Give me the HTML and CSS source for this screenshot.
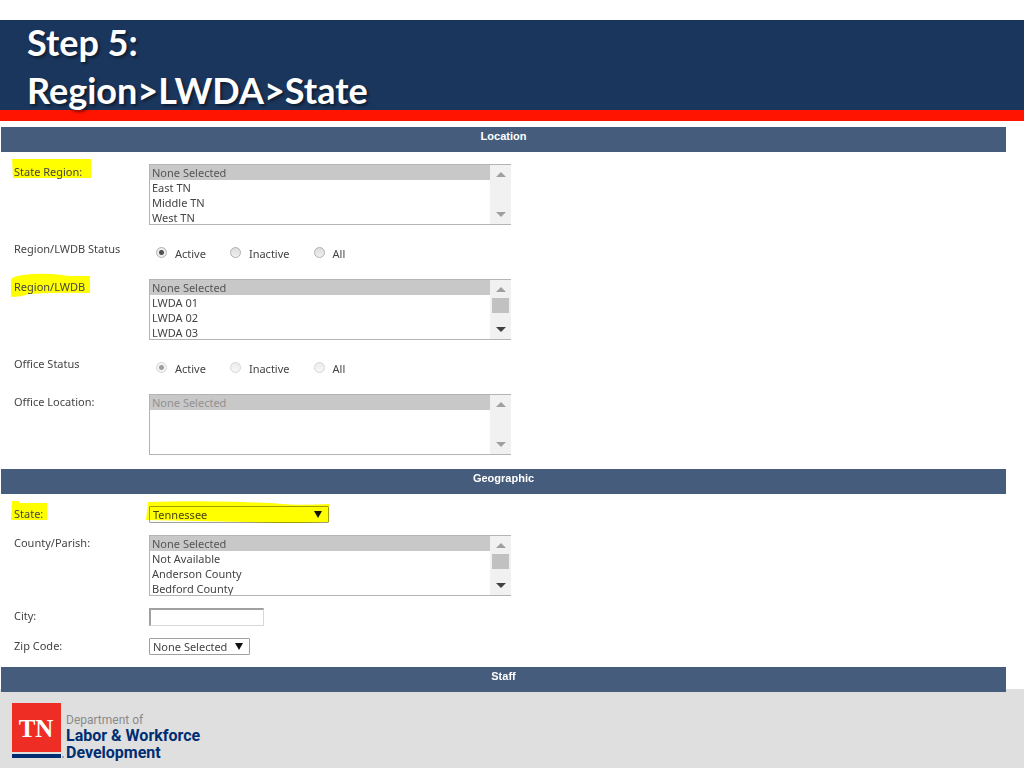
FILE: index.html
```html
<!DOCTYPE html>
<html lang="en">
<head>
    <meta charset="UTF-8">
    <meta name="viewport" content="width=device-width, initial-scale=1.0">
    <title>Step 5: Region&gt;LWDA&gt;State</title>
    <link rel="stylesheet" href="styles.css">
</head>
<body>
    <header class="banner">
        <h1>Step 5:<br>Region&gt;LWDA&gt;State</h1>
    </header>

    <form class="criteria">
        <!-- Location -->
        <h2 class="bar">Location</h2>
        <div class="section location">
            <div class="row">
                <label class="name" for="stateRegion">
                    <svg class="marker" width="82" height="22" viewBox="0 0 82 22"><path d="M1 1H80V20H2Z"/></svg>
                    <span>State Region:</span>
                </label>
                <div class="listbox">
                    <select id="stateRegion" multiple size="4">
                        <option selected>None Selected</option>
                        <option>East TN</option>
                        <option>Middle TN</option>
                        <option>West TN</option>
                    </select>
                    <div class="scroll">
                        <i class="up"></i>
                        <i class="down"></i>
                    </div>
                </div>
            </div>

            <div class="row status">
                <span class="name" id="regionStatus">Region/LWDB Status</span>
                <div class="radios" role="radiogroup" aria-labelledby="regionStatus">
                    <label><input type="radio" name="region" checked>Active</label>
                    <label><input type="radio" name="region">Inactive</label>
                    <label><input type="radio" name="region">All</label>
                </div>
            </div>

            <div class="row">
                <label class="name" for="region">
                    <svg class="marker tall" width="82" height="26" viewBox="0 0 82 26"><path d="M0 7Q3 4 12 3Q34 0 58 4L79 4V21Q48 20 18 22Q10 25 0 25Z"/></svg>
                    <span>Region/LWDB</span>
                </label>
                <div class="listbox">
                    <select id="region" multiple size="4">
                        <option selected>None Selected</option>
                        <option>LWDA 01</option>
                        <option>LWDA 02</option>
                        <option>LWDA 03</option>
                    </select>
                    <div class="scroll active">
                        <i class="up"></i>
                        <b class="thumb"></b>
                        <i class="down"></i>
                    </div>
                </div>
            </div>

            <div class="row status">
                <span class="name" id="officeStatus">Office Status</span>
                <div class="radios" role="radiogroup" aria-labelledby="officeStatus">
                    <label><input type="radio" name="office" checked disabled>Active</label>
                    <label><input type="radio" name="office" disabled>Inactive</label>
                    <label><input type="radio" name="office" disabled>All</label>
                </div>
            </div>

            <div class="row">
                <label class="name" for="office">Office Location:</label>
                <div class="listbox">
                    <select id="office" multiple size="4" disabled>
                        <option selected>None Selected</option>
                    </select>
                    <div class="scroll">
                        <i class="up"></i>
                        <i class="down"></i>
                    </div>
                </div>
            </div>
        </div>

        <!-- Geographic -->
        <h2 class="bar">Geographic</h2>
        <div class="section">
            <div class="row">
                <label class="name" for="state">
                    <svg class="marker" width="82" height="22" viewBox="0 0 82 22"><path d="M1 1H8V3H36V20H0Z"/></svg>
                    <span>State:</span>
                </label>
                <div class="dropdown state">
                    <select id="state">
                        <option>Tennessee</option>
                    </select>
                    <i class="arrow"></i>
                    <svg class="marker" width="186" height="24" viewBox="0 0 186 24"><path d="M2 2Q60 0 125 3Q150 6 183 4V22Q150 24 100 22L0 20Z"/></svg>
                </div>
            </div>

            <div class="row">
                <label class="name" for="county">County/Parish:</label>
                <div class="listbox">
                    <select id="county" multiple size="4">
                        <option selected>None Selected</option>
                        <option>Not Available</option>
                        <option>Anderson County</option>
                        <option>Bedford County</option>
                    </select>
                    <div class="scroll active">
                        <i class="up"></i>
                        <b class="thumb"></b>
                        <i class="down"></i>
                    </div>
                </div>
            </div>

            <div class="row">
                <label class="name" for="city">City:</label>
                <input class="city" id="city" type="text">
            </div>

            <div class="row">
                <label class="name" for="zip">Zip Code:</label>
                <div class="dropdown zip">
                    <select id="zip">
                        <option>None Selected</option>
                    </select>
                    <i class="arrow"></i>
                </div>
            </div>
        </div>

        <!-- Staff -->
        <h2 class="bar">Staff</h2>
    </form>

    <footer class="footer">
        <svg class="logo" width="53" height="55" viewBox="0 0 53 55" role="img" aria-label="TN">
            <rect width="49" height="49" fill="#ee2d24"/>
            <rect y="51" width="49" height="4" fill="#002d72"/>
            <circle cx="51" cy="54" r="1" fill="#8a93a8"/>
            <text class="tn" x="24" y="34" text-anchor="middle">TN</text>
        </svg>
        <p class="dept">Department of<br><strong>Labor &amp; Workforce<br>Development</strong></p>
    </footer>
</body>
</html>
```

FILE: styles.css
```css
* {
    margin: 0;
    padding: 0;
    box-sizing: border-box;
}

body {
    font-family: 'Noto Sans', 'Open Sans', sans-serif;
    font-size: 11px;
    line-height: 16px;
    color: #444;
    background: #fff;
    min-height: 100vh;
    display: flex;
    flex-direction: column;
    padding-top: 20px;
}

.banner {
    background: #1b365d;
    border-bottom: 11px solid #fe1400;
    padding-left: 27px;
}

h1 {
    margin: -2px 0 -4px;
    font-family: Lato, sans-serif;
    font-size: 36px;
    line-height: 48px;
    font-weight: bold;
    color: #fff;
    text-shadow: 2px 2px 3px rgba(0, 0, 0, 0.5);
}

.criteria {
    position: relative;
    z-index: 1;
    margin: 6px 18px 0 1px;
}

.bar {
    height: 25px;
    background: #465c7c;
    color: #fff;
    font-family: 'Liberation Sans', Arial, sans-serif;
    font-size: 11px;
    line-height: 19px;
    font-weight: bold;
    text-align: center;
}

.section {
    display: flex;
    flex-direction: column;
    gap: 12px;
    padding: 12px 13px;
}

.location {
    gap: 14px;
    padding-bottom: 14px;
}

.row {
    display: flex;
    align-items: flex-start;
}

.name {
    position: relative;
    width: 135px;
}

.name span {
    position: relative;
}

.status {
    height: 26px;
}

.status .name {
    padding-top: 2px;
}

/* highlighter strokes */
.marker {
    position: absolute;
    left: -3px;
    top: -6px;
    fill: #ff0;
    mix-blend-mode: multiply;
    pointer-events: none;
}

.marker.tall {
    top: -7px;
}

select,
input {
    font: inherit;
    color: inherit;
    outline: none;
}

/* list boxes */
.listbox {
    display: flex;
    width: 362px;
    height: 61px;
    border: 1px solid #b4b4b4;
    border-right: none;
}

.listbox select {
    flex: 1;
    border: none;
    border-radius: 0;
    background: #fff;
    overflow: hidden;
    scrollbar-width: none;
}

.listbox option {
    height: 15px;
    min-height: 15px;
    line-height: 15px;
    padding: 0 2px;
    color: #444;
}

.listbox option:checked {
    background: #c8c8c8 linear-gradient(#c8c8c8, #c8c8c8);
    color: #555;
}

.listbox select:disabled {
    opacity: 1;
}

.listbox select:disabled option {
    color: #929292;
}

.scroll {
    display: flex;
    flex-direction: column;
    align-items: center;
    justify-content: space-between;
    width: 21px;
    padding: 7px 0;
    background: #f1f1f1;
}

.up,
.down {
    width: 0;
    height: 0;
    border: 5px solid transparent;
}

.up {
    border-top: none;
    border-bottom: 5px solid #a0a0a0;
}

.down {
    border-bottom: none;
    border-top: 5px solid #a0a0a0;
}

.scroll.active .down {
    border-top-color: #404040;
}

.thumb {
    width: 17px;
    height: 15px;
    margin-bottom: 9px;
    background: #c1c1c1;
}

/* radio buttons */
.radios {
    display: flex;
    gap: 24px;
    padding: 7px 0 0 7px;
}

.radios label {
    display: flex;
    gap: 8px;
}

.radios input {
    appearance: none;
    width: 11px;
    height: 11px;
    margin-top: 1px;
    border: 1px solid #b0b0b0;
    border-radius: 50%;
    background: linear-gradient(#dcdcdc, #f0f0f0);
}

.radios input:checked {
    background: radial-gradient(circle, #505050 0 2px, #ececec 3px);
}

.radios input:disabled {
    opacity: 0.55;
}

/* drop-downs */
.dropdown {
    position: relative;
    height: 17px;
}

.dropdown select {
    display: block;
    appearance: none;
    width: 100%;
    height: 17px;
    padding: 0 3px;
    border: 1px solid #a0a0a0;
    border-radius: 1px;
    background: #fff;
    line-height: 15px;
}

.state {
    width: 180px;
}

.zip {
    width: 101px;
}

.arrow {
    position: absolute;
    right: 7px;
    top: 5px;
    border: 4px solid transparent;
    border-top: 7px solid #111;
    border-bottom: none;
    pointer-events: none;
}

.city {
    width: 115px;
    height: 18px;
    padding: 0 3px;
    border: 1px solid #d8d8d8;
    border-top: 2px solid #a0a0a0;
    border-left: 2px solid #a0a0a0;
}

.footer {
    flex: 1;
    display: flex;
    align-items: flex-start;
    gap: 1px;
    margin-top: -3px;
    padding: 14px 12px 9px;
    background: #dfdfdf;
}

.tn {
    fill: #fff;
    font-family: 'Liberation Serif', serif;
    font-size: 25px;
    font-weight: bold;
}

.dept {
    padding-top: 9px;
    color: #8a8a8a;
    font-family: Roboto, sans-serif;
    font-size: 12px;
    line-height: 16px;
}

.dept strong {
    color: #002d72;
    font-size: 16px;
    font-weight: bold;
}
```
